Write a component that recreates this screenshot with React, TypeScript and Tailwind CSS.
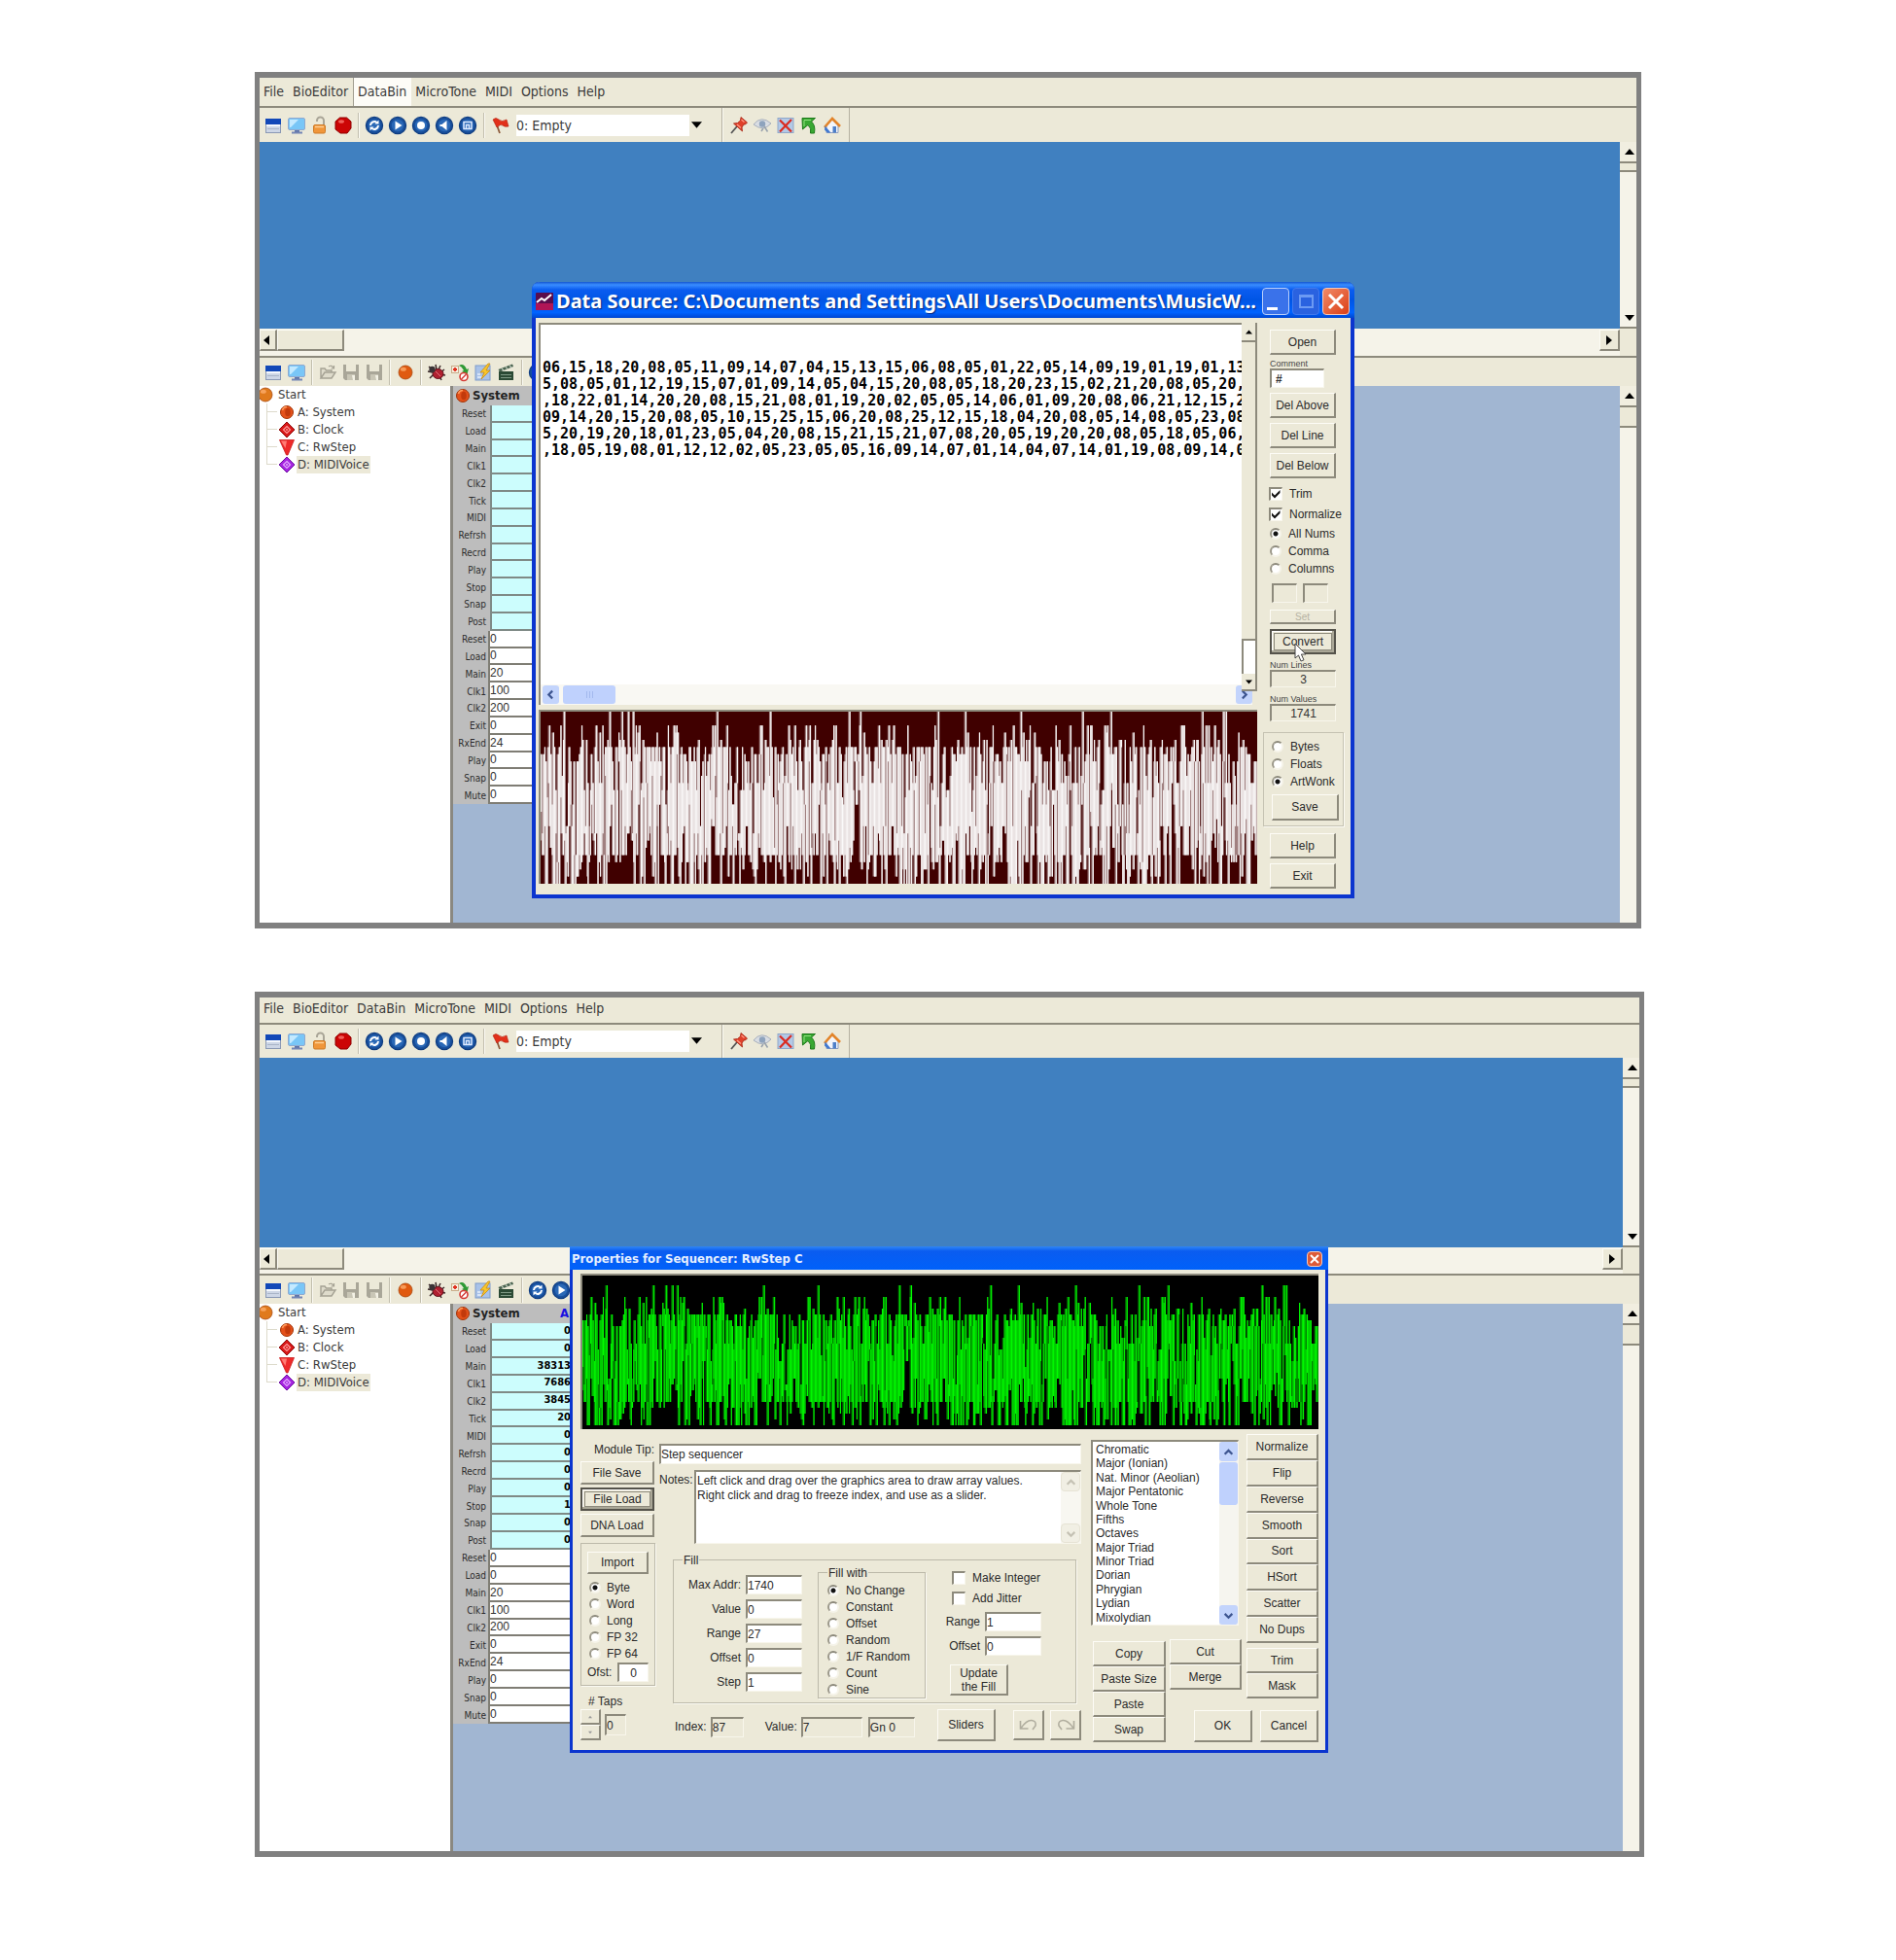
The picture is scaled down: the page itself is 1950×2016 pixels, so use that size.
import React from "react";

/* ---------- data ---------- */

const LETTER_FREQ = [
  82, 15, 28, 43, 127, 22, 20, 61, 70, 2, 8, 40, 24, 67, 75, 19, 1, 60, 63, 91, 28, 10, 24, 2, 0, 0,
];
const PEAKS = [
  0.032, 0.097, 0.114, 0.122, 0.13, 0.246, 0.321, 0.431, 0.447, 0.554, 0.592, 0.67, 0.757, 0.796,
  0.924, 0.953, 0.956,
];

function buildSamples(count: number): number[] {
  const total = LETTER_FREQ.reduce((a, b) => a + b, 0);
  let seed = 20417;
  const out: number[] = [];
  for (let i = 0; i < count; i++) {
    seed = (seed * 1103515245 + 12345) % 2147483648;
    let r = (seed / 2147483648) * total;
    let v = 0;
    while (v < 25 && r >= LETTER_FREQ[v]) {
      r -= LETTER_FREQ[v];
      v++;
    }
    out.push(Math.min(v + 1, 23));
  }
  PEAKS.forEach((p) => {
    out[Math.round((p * count) / 3) * 3 + 1] = 25;
  });
  return out;
}

const SAMPLES = buildSamples(1741);

/* One vertical bar per three samples, spanning the range of the samples around it. */
function wavePath(width: number, y0: number, perStep: number, span: number): string {
  const step = (width / SAMPLES.length) * 3;
  let d = "";
  for (let i = 0; i < SAMPLES.length; i += 3) {
    const near = SAMPLES.slice(i, i + span);
    const x = ((i / 3 + 0.5) * step).toFixed(2);
    const hi = (y0 - (Math.max(...near) - 1) * perStep).toFixed(1);
    const lo = (y0 - (Math.min(...near) - 1) * perStep).toFixed(1);
    d += `M${x} ${hi}V${lo}`;
  }
  return d;
}

const DATA_LINES = [
  "06,15,18,20,08,05,11,09,14,07,04,15,13,15,06,08,05,01,22,05,14,09,19,01,19,01,13,",
  "5,08,05,01,12,19,15,07,01,09,14,05,04,15,20,08,05,18,20,23,15,02,21,20,08,05,20,0",
  ",18,22,01,14,20,20,08,15,21,08,01,19,20,02,05,05,14,06,01,09,20,08,06,21,12,15,22",
  "09,14,20,15,20,08,05,10,15,25,15,06,20,08,25,12,15,18,04,20,08,05,14,08,05,23,08,",
  "5,20,19,20,18,01,23,05,04,20,08,15,21,15,21,07,08,20,05,19,20,20,08,05,18,05,06,1",
  ",18,05,19,08,01,12,12,02,05,23,05,05,16,09,14,07,01,14,04,07,14,01,19,08,09,14,07",
];

const INPUT_ROWS = ["Reset", "Load", "Main", "Clk1", "Clk2", "Tick", "MIDI", "Refrsh", "Recrd", "Play", "Stop", "Snap", "Post"];
const SETTING_ROWS: [string, string][] = [
  ["Reset", "0"],
  ["Load", "0"],
  ["Main", "20"],
  ["Clk1", "100"],
  ["Clk2", "200"],
  ["Exit", "0"],
  ["RxEnd", "24"],
  ["Play", "0"],
  ["Snap", "0"],
  ["Mute", "0"],
];

/* ---------- shared styles ---------- */

const APP_FONT = "font-['DejaVu_Sans_Condensed','Noto_Sans',sans-serif]";
const DLG_FONT = "font-['Liberation_Sans',sans-serif]";
const RAISED = "border-t border-l border-t-[#fdfcf6] border-l-[#fdfcf6] border-b-2 border-r-2 border-b-[#8d8a7c] border-r-[#8d8a7c] bg-[#ece9d8]";
const SUNKEN = "border-t-2 border-l-2 border-t-[#8d8a7c] border-l-[#8d8a7c] border-b border-r border-b-[#f8f6ec] border-r-[#f8f6ec]";

/* ---------- icons ---------- */

const svgProps = { width: 20, height: 20, viewBox: "0 0 20 20", "aria-hidden": true } as const;

const WindowIcon = () => (
  <svg {...svgProps}>
    <rect x="2" y="3" width="16" height="15" fill="#cdd6e6" />
    <rect x="2" y="3" width="16" height="6" fill="#1248b8" />
    <path d="M2 10h16" stroke="#f4f7fc" strokeWidth="2" />
    <path d="M4 13.500h12" stroke="#aab5c8" />
    <path d="M2 17.500h16M2.500 9v9M17.500 9v9" stroke="#8a98b4" />
  </svg>
);
const MonitorIcon = () => (
  <svg {...svgProps}>
    <rect x="1.500" y="2.500" width="17" height="12" rx="1.500" fill="#79c6f7" stroke="#8fa9cf" />
    <path d="M3 4h9L4 12H3z" fill="#c4e9ff" />
    <path d="M8 15h5v2H8z" fill="#5f74a8" />
    <path d="M5 17.500h11" stroke="#7385b5" strokeWidth="2" />
  </svg>
);
const LockIcon = () => (
  <svg {...svgProps}>
    <path d="M7 6V5a3.500 3.500 0 0 1 7 0v5" fill="none" stroke="#a9a597" strokeWidth="2" />
    <rect x="3.500" y="9.500" width="12" height="8.500" rx="1.500" fill="#f0963a" stroke="#cd7a27" />
    <path d="M5 11.500h9" stroke="#ffcf94" strokeWidth="1.500" />
  </svg>
);
const StopIcon = () => (
  <svg {...svgProps}>
    <path d="M6.500 2h7L18 6v7l-4 5H7l-5-4V6z" fill="#cc0505" stroke="#8e0000" />
    <ellipse cx="8" cy="6" rx="3" ry="1.800" fill="#f0605a" />
  </svg>
);
const Ball = ({ color = "#e05a10" }: { color?: string }) => (
  <svg {...svgProps}>
    <circle cx="10" cy="10" r="7" fill={color} stroke="#a8480c" strokeWidth=".8" />
    <ellipse cx="7.800" cy="6.800" rx="3" ry="2" fill="#ffb070" opacity=".75" />
  </svg>
);
const SystemBall = () => (
  <svg {...svgProps}>
    <circle cx="10" cy="10" r="6.500" fill="#e4511a" stroke="#a23408" />
    <ellipse cx="11" cy="10" rx="2.800" ry="4.300" fill="#c23a0c" />
    <path d="M5.500 8q1-3.500 4.500-3.500" stroke="#ff9c5c" fill="none" strokeWidth="1.500" />
  </svg>
);
const Round = ({ children }: { children?: React.ReactNode }) => (
  <svg {...svgProps}>
    <circle cx="10" cy="10" r="8.600" fill="#184f9c" stroke="#0f3d80" strokeWidth="1.200" />
    <circle cx="10" cy="10" r="6.200" fill="#2a68b6" />
    {children}
  </svg>
);
const RefreshRound = () => (
  <Round>
    <path d="M6 10a4 4 0 0 1 6.500-3M14 10a4 4 0 0 1-6.500 3" stroke="#fff" strokeWidth="2" fill="none" />
    <path d="M10.500 8.500h4v-4zM9.500 11.500h-4v4z" fill="#fff" />
  </Round>
);
const PlayRound = () => (
  <Round>
    <path d="M7.500 5.500v9l7-4.500z" fill="#fff" />
  </Round>
);
const DotRound = () => (
  <Round>
    <circle cx="10" cy="10" r="4" fill="#fff" />
  </Round>
);
const BackRound = () => (
  <Round>
    <path d="M12.500 5v10l-5-4H5.500V9h2z" fill="#fff" />
  </Round>
);
const PageRound = () => (
  <Round>
    <path d="M6 6.500h8v7H6zM8.500 13V9.500h3V13" fill="none" stroke="#dfeaff" strokeWidth="1.500" />
  </Round>
);
const FlagIcon = () => (
  <svg {...svgProps}>
    <path d="M4 4l5 14" stroke="#8c5a3a" strokeWidth="1.800" />
    <path d="M2 4q3-3 6 0t8 0l2 7q-4 1-6-1t-6 2z" fill="#e2301a" stroke="#b01c0c" strokeWidth=".6" />
  </svg>
);
const PinIcon = () => (
  <svg {...svgProps}>
    <path d="M2 18l6-7" stroke="#555" strokeWidth="1.800" />
    <path d="M12 1.500l6.500 5.500-2 2-1.500 0-2 3 .5 4L4.500 8l4-.5 3-2.500z" fill="#e0402a" stroke="#a3200f" strokeWidth=".8" />
    <path d="M12.500 4l3 2.500M8 9l4 3.500" stroke="#ff9a85" strokeWidth="1.300" />
  </svg>
);
const EyeIcon = () => (
  <svg {...svgProps}>
    <path d="M1 9q8-10 18-1-8 9-18 1z" fill="#d9dde3" stroke="#a8b0bc" />
    <circle cx="10" cy="8.500" r="3.200" fill="#8ea3bd" />
    <path d="M12 11l3.500 5.500M11 13l-2 3" stroke="#9aa3ae" strokeWidth="1.600" />
  </svg>
);
const CrossIcon = () => (
  <svg {...svgProps}>
    <rect x="2" y="2.500" width="16" height="15" fill="#b3c9e6" stroke="#8fa7c9" />
    <path d="M4 4.500l12 12M16 4l-12 12.500" stroke="#db2a20" strokeWidth="2.200" />
  </svg>
);
const GreenArrowIcon = () => (
  <svg {...svgProps}>
    <path d="M3 2.500h13.500L12.500 6q4.500 4 3 12l-4 0q1.500-5-2.500-8.500L3.500 14z" fill="#38a832" stroke="#1d7a1a" />
    <path d="M5 4.500h7M5 5v6" stroke="#8fe07f" />
  </svg>
);
const HouseIcon = () => (
  <svg {...svgProps}>
    <path d="M4 10v7.500h12V10l-6-6z" fill="#f3f5fa" stroke="#8f9fc0" />
    <path d="M2 12L10 3l8 8" fill="none" stroke="#e2842a" strokeWidth="2.600" />
    <path d="M2.500 10.500l6 7H5l-3-3z" fill="#3f78d0" />
    <rect x="10.500" y="11" width="3.500" height="6.500" fill="#4d7fc8" />
  </svg>
);
const FolderIcon = () => (
  <svg {...svgProps}>
    <path d="M3 16V6h4l1.500 2H14v2M3 16l4-6h11l-4 6z" fill="#dedbcb" stroke="#a5a294" strokeWidth="1.400" />
    <path d="M11 4q3-2 5 1.500M16.500 3v3h-3" fill="none" stroke="#a5a294" strokeWidth="1.200" />
  </svg>
);
const DiskIcon = () => (
  <svg {...svgProps}>
    <path d="M2 2h16v16H4l-2-2z" fill="#a9a698" />
    <path d="M5 2h10v7H5z" fill="#ece9d8" />
    <path d="M6 12h8v6H6z" fill="#c9c6b6" />
    <path d="M11 13h3v5h-2z" fill="#f4f2e6" />
  </svg>
);
const BugIcon = () => (
  <svg {...svgProps}>
    <path d="M2 4l5 4M1 9l5 1M3 16l4-4M9 2l1 5M14 3l-2 4M18 7l-4 3M19 13l-5-1M15 18l-2-4" stroke="#3c2a2a" strokeWidth="1.500" />
    <ellipse cx="11.500" cy="11.500" rx="5.500" ry="5" fill="#b02030" stroke="#5c0e18" />
    <circle cx="5.500" cy="7" r="3.200" fill="#3a3336" />
    <path d="M9 9l5 5" stroke="#e2707a" />
  </svg>
);
const PalmIcon = () => (
  <svg {...svgProps}>
    <rect x="1.500" y="3.500" width="7" height="7" fill="#f6efe0" stroke="#c9ac8a" />
    <path d="M3 7h4M5 5v4" stroke="#e03020" strokeWidth="1.800" />
    <path d="M9 3q5-3 8 4l2-1-1.500 6-5.500-3 2-1q-2-4-5-5z" fill="#2f9a35" />
    <circle cx="14" cy="14.500" r="4" fill="#fff" stroke="#d43a34" strokeWidth="1.600" />
    <path d="M11.500 17l5-5" stroke="#d43a34" strokeWidth="1.500" />
  </svg>
);
const BoltIcon = () => (
  <svg {...svgProps}>
    <rect x="2" y="3" width="15" height="15" fill="#a9c2e8" stroke="#7f9cc9" />
    <path d="M4 15h6M4 12h3" stroke="#e6effc" strokeWidth="1.500" />
    <path d="M15 1L7 10h4l-3 7 9-9h-4l4-7z" fill="#f9c62b" stroke="#c98a14" strokeWidth=".8" />
  </svg>
);
const ClapIcon = () => (
  <svg {...svgProps}>
    <rect x="2" y="9" width="15" height="9" fill="#2b4a34" />
    <path d="M1.500 7L16 1.500l1 2.500L3 9.500z" fill="#47604d" />
    <path d="M5 6l2 2M9 4.500l2 2M13 3l2 2" stroke="#b8c7b8" strokeWidth="1.300" />
    <path d="M4 12.500h11M4 15.500h11" stroke="#7f9a85" />
  </svg>
);
const Diamond = ({ fill, dark, light }: { fill: string; dark: string; light: string }) => (
  <svg {...svgProps}>
    <path d="M10 2l8 8-8 8-8-8z" fill={fill} stroke={dark} />
    <path d="M10 6.500l3.500 3.500-3.500 3.500L6.500 10z" fill="none" stroke={light} strokeWidth="1.200" />
    <circle cx="10" cy="10" r="1" fill={light} />
  </svg>
);
const TriangleDown = () => (
  <svg {...svgProps}>
    <path d="M2.500 2.500h15L11 18H9.500z" fill="#ee2a2a" stroke="#c81818" strokeWidth=".8" />
    <path d="M4 3.500h6L8.500 11z" fill="#ff7c74" />
  </svg>
);
const CheckMark = () => (
  <svg width="9" height="9" viewBox="0 0 9 9" className="pointer-events-none absolute left-[3px] top-[3px]" aria-hidden>
    <path d="M0 2.500l3 3L8.500 0v3L3 8.500 0 5.500z" fill="#111" />
  </svg>
);

/* ---------- small controls ---------- */

type Dir = "up" | "down" | "left" | "right";
const TRI: Record<Dir, string> = {
  up: "M5 2l5 6H0z",
  down: "M0 2h10L5 8z",
  left: "M8 0v10L2 5z",
  right: "M2 0v10l6-5z",
};
const Arrow = ({ dir, size = 10, color = "#000" }: { dir: Dir; size?: number; color?: string }) => (
  <svg width={size} height={size} viewBox="0 0 10 10" aria-hidden>
    <path d={TRI[dir]} fill={color} />
  </svg>
);
const CHEVRON: Record<Dir, string> = {
  up: "M1.500 7L5 3.500 8.500 7",
  down: "M1.500 3.500L5 7l3.500-3.500",
  left: "M6.500 1.500L3 5l3.500 3.500",
  right: "M3.500 1.500L7 5 3.500 8.500",
};
const Chevron = ({ dir, color = "#3d5590" }: { dir: Dir; color?: string }) => (
  <svg width="11" height="11" viewBox="0 0 10 10" aria-hidden>
    <path d={CHEVRON[dir]} fill="none" stroke={color} strokeWidth="2" />
  </svg>
);

function Tool({ label, children }: { label: string; children: React.ReactNode }) {
  return (
    <button type="button" aria-label={label} className="flex h-6 w-6 shrink-0 items-center justify-center">
      {children}
    </button>
  );
}
const Sep = ({ space = "mx-[3px]" }: { space?: string }) => (
  <span className={`h-[26px] w-[2px] shrink-0 border-l border-r border-l-[#c2beae] border-r-[#fbfaf3] ${space}`} />
);

function Btn({ className = "", children }: { className?: string; children: React.ReactNode }) {
  return (
    <button type="button" className={`flex items-center justify-center whitespace-nowrap text-[12px] leading-[14px] text-[#2a2a2a] ${RAISED} ${className}`}>
      {children}
    </button>
  );
}

function FocusBtn({ className = "", children }: { className?: string; children: React.ReactNode }) {
  return (
    <button
      type="button"
      className={`flex border-2 border-[#55534b] bg-[#ece9d8] p-[2px] text-[12px] leading-[14px] text-[#2a2a2a] shadow-[inset_-2px_-2px_0_#aaa797,inset_1px_1px_0_#fff] ${className}`}
    >
      <span className="flex flex-1 items-center justify-center self-stretch border border-[#8d8a7c]">{children}</span>
    </button>
  );
}

function Radio({ name, label, checked, className = "", gap = "gap-3" }: { name: string; label: string; checked?: boolean; className?: string; gap?: string }) {
  return (
    <label className={`flex items-center whitespace-nowrap text-[12px] text-[#2a2a2a] ${gap} ${className}`}>
      <input
        type="radio"
        name={name}
        defaultChecked={checked}
        className="m-0 h-3 w-3 shrink-0 appearance-none rounded-full border-2 border-b-[#f6f4ea] border-l-[#9b988a] border-r-[#f6f4ea] border-t-[#8d8a7c] bg-white checked:bg-[radial-gradient(circle,#111_0,#111_2px,#fff_3px)]"
      />
      {label}
    </label>
  );
}

function Check({ label, checked, className = "" }: { label: string; checked?: boolean; className?: string }) {
  return (
    <label className={`flex items-center gap-[7px] whitespace-nowrap text-[12px] text-[#2a2a2a] ${className}`}>
      <span className="relative flex">
        <input type="checkbox" defaultChecked={checked} className={`m-0 h-[14px] w-[14px] shrink-0 appearance-none bg-white ${SUNKEN}`} />
        {checked && <CheckMark />}
      </span>
      {label}
    </label>
  );
}

/* ---------- scroll bars of the workspace ---------- */

function VScroll({ thumb, bottomArrow }: { thumb: string; bottomArrow?: boolean }) {
  return (
    <div className="flex w-[17px] shrink-0 flex-col bg-[#f5f3e9]">
      <button type="button" aria-label="Scroll up" className="flex h-[22px] items-center justify-end border-b-2 border-[#8d8a7c] bg-[#f1eee0] pr-[2px]">
        <Arrow dir="up" />
      </button>
      <div className={`border-b-2 border-[#8d8a7c] bg-[#ece9d8] ${thumb}`} />
      <div className="flex-1" />
      {bottomArrow && (
        <button type="button" aria-label="Scroll down" className="flex h-5 items-center justify-end border-b-2 border-[#8d8a7c] pr-[2px]">
          <Arrow dir="down" />
        </button>
      )}
    </div>
  );
}

function HScroll({ height }: { height: string }) {
  return (
    <div className={`flex border-b-2 border-[#8d8a7c] bg-[#ece9d8] ${height}`}>
      <div className="flex flex-1 items-start bg-[#f5f3e9] pt-px">
        <button type="button" aria-label="Scroll left" className={`flex h-[22px] w-[18px] items-center justify-start pl-px ${RAISED}`}>
          <Arrow dir="left" />
        </button>
        <div className={`h-[22px] w-[69px] ${RAISED}`} />
        <div className="flex-1" />
        <button type="button" aria-label="Scroll right" className={`flex h-[22px] w-[21px] items-center justify-center ${RAISED}`}>
          <Arrow dir="right" />
        </button>
      </div>
      <div className="w-[17px]" />
    </div>
  );
}

/* ---------- workspace ---------- */

function MenuBar({ active, className }: { active?: string; className: string }) {
  return (
    <nav className={`flex items-stretch border-b-2 border-[#8d8a7c] bg-[#ece9d8] text-[14px] text-[#3a3a3a] ${className}`}>
      {["File", "BioEditor", "DataBin", "MicroTone", "MIDI", "Options", "Help"].map((m) => (
        <button
          key={m}
          type="button"
          className={
            m === active
              ? "flex items-center border-l border-[#a19e90] bg-[#fdfcf7] pl-1 pr-[5px]"
              : "flex items-center pl-1 pr-[5px]"
          }
        >
          {m}
        </button>
      ))}
    </nav>
  );
}

function MainToolbar({ height }: { height: string }) {
  return (
    <div className={`flex items-stretch bg-[#ece9d8] ${height}`}>
      <div className="flex w-[476px] items-center border-r border-[#b5b1a1] pl-[2px]">
        <Tool label="Window"><WindowIcon /></Tool>
        <Tool label="Display"><MonitorIcon /></Tool>
        <Tool label="Unlock"><LockIcon /></Tool>
        <Tool label="Stop"><StopIcon /></Tool>
        <Sep />
        <Tool label="Refresh"><RefreshRound /></Tool>
        <Tool label="Play"><PlayRound /></Tool>
        <Tool label="Record"><DotRound /></Tool>
        <Tool label="Back"><BackRound /></Tool>
        <Tool label="Page"><PageRound /></Tool>
        <Sep space="mx-1" />
        <Tool label="Flag"><FlagIcon /></Tool>
        <div className="relative ml-1 flex h-[22px] w-[194px]">
          <select aria-label="Preset" className="flex-1 appearance-none border-r-[16px] border-[#ece9d8] bg-white text-[14px] leading-[22px] text-[#3a3a3a]">
            <option>0: Empty</option>
          </select>
          <span className="pointer-events-none absolute right-[3px] top-[5px]">
            <Arrow dir="down" size={11} />
          </span>
        </div>
      </div>
      <div className="flex items-center border-l border-r border-l-[#fbfaf3] border-r-[#b5b1a1] pl-1 pr-[5px]">
        <Tool label="Pin"><PinIcon /></Tool>
        <Tool label="View"><EyeIcon /></Tool>
        <Tool label="Delete"><CrossIcon /></Tool>
        <Tool label="Import"><GreenArrowIcon /></Tool>
        <Tool label="Home"><HouseIcon /></Tool>
      </div>
    </div>
  );
}

function ModuleToolbar() {
  return (
    <div className="flex h-[29px] items-center bg-[#ece9d8] pl-[2px]">
      <Tool label="Window"><WindowIcon /></Tool>
      <Tool label="Display"><MonitorIcon /></Tool>
      <Sep />
      <Tool label="Open"><FolderIcon /></Tool>
      <Tool label="Save"><DiskIcon /></Tool>
      <Tool label="Save as"><DiskIcon /></Tool>
      <Sep />
      <Tool label="Module"><Ball /></Tool>
      <Sep />
      <Tool label="Debug"><BugIcon /></Tool>
      <Tool label="Swap"><PalmIcon /></Tool>
      <Tool label="Run"><BoltIcon /></Tool>
      <Tool label="Scene"><ClapIcon /></Tool>
      <Sep />
      <Tool label="Refresh"><RefreshRound /></Tool>
      <Tool label="Play"><PlayRound /></Tool>
    </div>
  );
}

function Tree() {
  const nodes: [React.ReactNode, string][] = [
    [<SystemBall />, "A: System"],
    [<Diamond fill="#d81818" dark="#8e0c0c" light="#ff9a9a" />, "B: Clock"],
    [<TriangleDown />, "C: RwStep"],
    [<Diamond fill="#a524e0" dark="#6d0fa0" light="#e3aaff" />, "D: MIDIVoice"],
  ];
  return (
    <div className="w-[196px] shrink-0 overflow-hidden bg-white text-[13px] leading-[18px] text-[#3a3a3a]">
      <div className="-ml-1 flex items-center">
        <span className="flex h-[18px] items-center"><Ball color="#e07a1c" /></span>
        <span className="pl-[3px]">Start</span>
      </div>
      <ul className="ml-[7px]">
        {nodes.map(([icon, text], i) => (
          <li key={text} className="flex h-[18px] items-center">
            <span className="flex h-[18px] w-[11px] flex-col">
              <span className="h-[9px] border-b border-l border-[#dddacb]" />
              <span className={i < nodes.length - 1 ? "h-[9px] border-l border-[#dddacb]" : "h-[9px]"} />
            </span>
            {icon}
            <span className={text.startsWith("D") ? "bg-[#ece9d8] px-px" : "pl-px"}>{text}</span>
          </li>
        ))}
      </ul>
    </div>
  );
}

function ModulePanel({ values, rowsHeight }: { values?: string[]; rowsHeight: string }) {
  return (
    <div className="w-[121px] shrink-0 self-start bg-[#bdbdbd]">
      <div className="flex h-5 items-center pr-[2px] text-[13px] font-bold text-[#222]">
        <SystemBall />
        <span className="flex-1">System</span>
        <span className="text-[#1a10e0]">A</span>
      </div>
      <div className={`grid auto-rows-fr ${rowsHeight}`}>
        {INPUT_ROWS.map((label, i) => (
          <div key={label} className="flex min-h-0 items-stretch">
            <span className="flex w-[34px] items-center justify-end text-[10px] text-[#2c2c2c]">{label}</span>
            <output className="ml-1 flex flex-1 items-center justify-end overflow-hidden border-b-2 border-l-2 border-[#7f8a86] bg-[#ccfdfd] text-[11px] font-bold text-black">
              {values ? values[i] : ""}
            </output>
          </div>
        ))}
        {SETTING_ROWS.map(([label, value], i) => (
          <label key={i} className="flex min-h-0 items-stretch">
            <span className="flex w-[34px] items-center justify-end text-[10px] text-[#2c2c2c]">{label}</span>
            <input
              defaultValue={value}
              className={`ml-[2px] w-0 min-w-0 flex-1 border-b-2 border-l-2 border-[#7f7d74] bg-white p-0 text-[12px] leading-none text-[#333] ${DLG_FONT}`}
            />
          </label>
        ))}
      </div>
    </div>
  );
}

/* ---------- "Data Source" dialog ---------- */

function DataSourceDialog() {
  return (
    <section
      role="dialog"
      aria-label="Data Source"
      className={`absolute left-[280px] top-[210px] w-[846px] rounded-t-lg border-4 border-t-0 border-[#0b35cf] bg-[#ece9d8] ${DLG_FONT}`}
    >
      <header className="-mx-1 flex h-[37px] items-center gap-[2px] rounded-t-lg bg-[linear-gradient(#1557d0_0,#3a8dff_3px,#0a5cf0_8px,#0055e5_50%,#0063ff_85%,#0046d0_100%)] pl-1 pr-[5px] pt-[2px]">
        <svg width="18" height="18" viewBox="0 0 18 18" aria-hidden className="shrink-0">
          <rect width="18" height="18" rx="1" fill="#5a0d4c" />
          <rect y="11" width="18" height="7" fill="#b01556" />
          <path d="M1 10l5-4 3 2 7-6" fill="none" stroke="#fff" strokeWidth="2" />
        </svg>
        <h2 className="flex-1 whitespace-nowrap pl-px font-['Noto_Sans',sans-serif] text-[20px] font-bold leading-6 text-white [text-shadow:1px_1px_1px_#0a2a80]">
          Data Source: C:\Documents and Settings\All Users\Documents\MusicW...
        </h2>
        <button type="button" aria-label="Minimize" className="flex h-7 w-7 items-end rounded border border-[#b9cffb] bg-[#3a72ea] p-1">
          <span className="h-[3px] w-[11px] bg-white" />
        </button>
        <button type="button" aria-label="Maximize" className="ml-px flex h-7 w-7 items-center justify-center rounded border border-[#3f78ee] bg-[#2a62e0]">
          <span className="h-[14px] w-[15px] border-2 border-t-[3px] border-[#6c9af3]" />
        </button>
        <button type="button" aria-label="Close" className="ml-px flex h-7 w-7 items-center justify-center rounded border border-[#f3c8ba] bg-[linear-gradient(135deg,#f08a68,#dc3f16)]">
          <svg width="18" height="18" viewBox="0 0 18 18" aria-hidden>
            <path d="M2 2l14 14M16 2L2 16" stroke="#fff" strokeWidth="3" />
          </svg>
        </button>
      </header>

      <div className="flex">
        <div className="flex flex-1 flex-col pb-[11px] pl-[3px] pt-[5px]">
          <div className="flex">
            <div className="flex min-w-0 flex-1 flex-col border-l-2 border-t-2 border-[#8d8a7c]">
              <textarea
                aria-label="Data"
                readOnly
                wrap="off"
                defaultValue={DATA_LINES.join("\n")}
                className="block h-[370px] w-full resize-none overflow-hidden whitespace-pre bg-white pl-[2px] pt-[36px] font-['DejaVu_Sans_Mono','Liberation_Mono',monospace] text-[15px] font-bold leading-[17px] text-black"
              />
              <div className="relative z-20 -mr-[11px] flex h-[21px] items-center bg-[#f9f8f3] pl-[2px]">
                <button type="button" aria-label="Scroll left" className="flex h-[19px] w-[17px] items-center justify-center rounded-[3px] bg-[#c3d4fc]"><Chevron dir="left" /></button>
                <div className="ml-1 flex h-[19px] w-[54px] items-center justify-center gap-[2px] rounded-[3px] bg-[#bfd1fd]">
                  <span className="h-[7px] w-px bg-[#a3b9ee]" />
                  <span className="h-[7px] w-px bg-[#a3b9ee]" />
                  <span className="h-[7px] w-px bg-[#a3b9ee]" />
                </div>
                <div className="flex-1" />
                <button type="button" aria-label="Scroll right" className="flex h-[19px] w-[17px] items-center justify-center rounded-[3px] bg-[#c3d4fc]"><Chevron dir="right" /></button>
              </div>
            </div>
            <div className="z-30 flex h-[379px] w-4 flex-col border-b-2 border-r-2 border-[#8d8a7c] bg-[#ece9d8]">
              <button type="button" aria-label="Scroll up" className="flex h-5 items-center justify-center border-b-2 border-[#8d8a7c]"><Arrow dir="up" size={7} /></button>
              <div className="flex-1 border-b-2 border-[#8d8a7c]" />
              <div className="h-[34px] border-l-2 border-[#8d8a7c] bg-white" />
              <button type="button" aria-label="Scroll down" className="flex h-4 items-center justify-center"><Arrow dir="down" size={7} /></button>
            </div>
          </div>
          <div className="mt-[5px] border-l-2 border-t-2 border-[#8d8a7c]">
            <svg viewBox="0 0 737 177" preserveAspectRatio="none" className="block h-[177px] w-full bg-[#400000]" role="img" aria-label="Data wave form">
              <path d={wavePath(737, 177, 7.4, 5)} stroke="#fff" strokeOpacity=".5" strokeWidth="1.270" fill="none" />
              <path d={wavePath(737, 177, 7.4, 3)} stroke="#fff" strokeOpacity=".5" strokeWidth="1.270" fill="none" />
              <path d={wavePath(737, 177, 7.4, 3)} stroke="#fff" strokeWidth=".9" fill="none" />
            </svg>
          </div>
        </div>

        <div className="flex w-24 flex-col pl-[13px] pr-[15px] pt-3">
          <Btn className="h-[26px]">Open</Btn>
          <label className="mt-1 flex flex-col items-start text-[9px] leading-[10px] text-[#444]">
            Comment
            <input defaultValue="#" className={`h-5 w-14 bg-white pl-1 text-[12px] font-bold text-[#333] ${SUNKEN}`} />
          </label>
          <Btn className="mt-[5px] h-[26px]">Del Above</Btn>
          <Btn className="mt-[5px] h-[26px]">Del Line</Btn>
          <Btn className="mt-[5px] h-[26px]">Del Below</Btn>
          <Check label="Trim" checked className="-ml-px mt-[5px] h-[21px]" />
          <Check label="Normalize" checked className="-ml-px h-[21px]" />
          <Radio name="format" label="All Nums" checked className="mt-px h-[18px]" gap="gap-[7px]" />
          <Radio name="format" label="Comma" className="h-[18px]" gap="gap-[7px]" />
          <Radio name="format" label="Columns" className="h-[18px]" gap="gap-[7px]" />
          <div className="mt-[6px] flex gap-[6px] pl-[2px]">
            <input aria-label="First column" className={`h-5 w-[26px] ${SUNKEN}`} />
            <input aria-label="Last column" className={`h-5 w-[26px] ${SUNKEN}`} />
          </div>
          <button type="button" disabled className={`mt-[7px] flex h-[15px] items-center justify-center text-[10px] text-[#b5b2a3] ${RAISED}`}>Set</button>
          <div className="relative mt-[5px] flex">
            <FocusBtn className="h-[26px] flex-1">Convert</FocusBtn>
            <svg width="13" height="20" viewBox="0 0 13 20" className="absolute left-[25px] top-[14px]" aria-hidden>
              <path d="M1 1v15l3.500-3 2.500 6 3-1.200-2.600-5.800H12z" fill="#fff" stroke="#444" />
            </svg>
          </div>
          <label className="mt-[6px] flex flex-col text-[9px] leading-[10px] text-[#444]">
            Num Lines
            <output className={`h-[18px] text-center text-[12px] leading-4 text-[#333] ${SUNKEN}`}>3</output>
          </label>
          <label className="mt-[7px] flex flex-col text-[9px] leading-[10px] text-[#444]">
            Num Values
            <output className={`h-[18px] text-center text-[12px] leading-4 text-[#333] ${SUNKEN}`}>1741</output>
          </label>
          <fieldset className="-ml-[7px] -mr-2 mt-[11px] border border-[#c5c2b2] pb-[5px] pl-2 pr-1 pt-[5px] shadow-[1px_1px_0_#fbfaf3]">
            <Radio name="output" label="Bytes" className="h-[18px]" gap="gap-[7px]" />
            <Radio name="output" label="Floats" className="h-[18px]" gap="gap-[7px]" />
            <Radio name="output" label="ArtWonk" checked className="h-[18px]" gap="gap-[7px]" />
            <Btn className="mt-1 h-[27px] w-full">Save</Btn>
          </fieldset>
          <Btn className="mt-[7px] h-[26px]">Help</Btn>
          <Btn className="mt-[5px] h-[26px]">Exit</Btn>
        </div>
      </div>
    </section>
  );
}

/* ---------- "Properties for Sequencer" dialog ---------- */

function Field({ label, value, width = "w-[58px]" }: { label: string; value: string; width?: string }) {
  return (
    <label className="flex h-5 items-center justify-end gap-[5px] whitespace-nowrap text-[12px] text-[#2a2a2a]">
      {label}
      <input defaultValue={value} className={`h-5 min-w-0 bg-white text-[12px] leading-none ${width} ${SUNKEN}`} />
    </label>
  );
}

function Readout({ label, value, width, className = "" }: { label?: string; value: string; width: string; className?: string }) {
  return (
    <label className={`flex items-center gap-1 whitespace-nowrap ${className}`}>
      {label}
      <output className={`flex h-[21px] items-center ${width} ${SUNKEN}`}>{value}</output>
    </label>
  );
}

function SequencerDialog() {
  const scales = ["Chromatic", "Major (Ionian)", "Nat. Minor (Aeolian)", "Major Pentatonic", "Whole Tone", "Fifths", "Octaves", "Major Triad", "Minor Triad", "Dorian", "Phrygian", "Lydian", "Mixolydian"];
  return (
    <section
      role="dialog"
      aria-label="Properties for Sequencer: RwStep C"
      className={`absolute left-[319px] top-[256px] w-[780px] border-[3px] border-t-0 border-[#0b35cf] bg-[#ece9d8] text-[12px] text-[#2a2a2a] ${DLG_FONT}`}
    >
      <header className="-mx-[3px] flex h-6 items-center bg-[linear-gradient(#2f86f5_0,#0a5cf0_5px,#0061fa_100%)] pl-[2px] pr-[6px] pt-px">
        <h2 className={`flex-1 text-[13px] font-bold text-[#e6efff] ${APP_FONT}`}>Properties for Sequencer: RwStep C</h2>
        <button type="button" aria-label="Close" className="flex h-4 w-4 items-center justify-center rounded-sm border border-[#f3c8ba] bg-[#dd5a38]">
          <svg width="10" height="10" viewBox="0 0 10 10" aria-hidden>
            <path d="M1 1l8 8M9 1L1 9" stroke="#fff" strokeWidth="2" />
          </svg>
        </button>
      </header>

      <div className="pb-2 pl-2 pr-[7px] pt-1">
        <div className="border-l-2 border-t-2 border-[#8d8a7c]">
          <svg viewBox="0 0 757 158" preserveAspectRatio="none" className="block h-[158px] w-full bg-black" role="img" aria-label="Sequence wave form">
            <path d={wavePath(757, 154, 6, 5)} stroke="#00ff00" strokeOpacity=".5" strokeWidth="1.300" fill="none" />
            <path d={wavePath(757, 154, 6, 3)} stroke="#00ff00" strokeWidth="1" fill="none" />
          </svg>
        </div>

        <div className="mt-[5px] flex">
          {/* left column */}
          <div className="mr-1 flex w-[77px] flex-col pt-2">
            <span className="h-5 whitespace-nowrap pr-px text-right leading-4">Module Tip:</span>
            <Btn className="mr-px h-6">File Save</Btn>
            <FocusBtn className="mr-px mt-[3px] h-6">File Load</FocusBtn>
            <Btn className="mr-px mt-[3px] h-6">DNA Load</Btn>
            <fieldset className="mt-[6px] flex h-[147px] flex-col border border-[#bcb9a9] px-[6px] pt-2 shadow-[1px_1px_0_#fbfaf3]">
              <Btn className="mb-[5px] h-[23px]">Import</Btn>
              {["Byte", "Word", "Long", "FP 32", "FP 64"].map((t) => (
                <Radio key={t} name="import" label={t} checked={t === "Byte"} className="h-[17px] pl-[2px]" gap="gap-[6px]" />
              ))}
              <label className="mt-px flex items-center justify-between">
                Ofst:
                <input defaultValue="0" className={`h-5 w-8 bg-white text-center text-[12px] ${SUNKEN}`} />
              </label>
            </fieldset>
            <span className="mt-2 pl-2 leading-4"># Taps</span>
            <div className="flex gap-1">
              <div className="flex w-[21px] flex-col">
                <Btn className="h-4"><Arrow dir="up" size={4} color="#999" /></Btn>
                <Btn className="h-4"><Arrow dir="down" size={4} color="#999" /></Btn>
              </div>
              <output aria-label="Taps" className={`mt-[5px] flex h-[22px] w-[22px] items-center ${SUNKEN}`}>0</output>
            </div>
          </div>

          {/* middle column */}
          <div className="mr-[10px] flex flex-1 flex-col pt-[10px]">
            <input aria-label="Module Tip" defaultValue="Step sequencer" className={`h-[21px] w-full bg-white text-[12px] ${SUNKEN}`} />
            <label className="mt-[6px] flex items-start">
              <span className="w-9 pt-[2px] leading-4">Notes:</span>
              <span className={`flex h-[76px] flex-1 bg-white ${SUNKEN}`}>
                <textarea
                  readOnly
                  defaultValue={"Left click and drag over the graphics area to draw array values.\nRight click and drag to freeze index, and use as a slider."}
                  className="h-full flex-1 resize-none overflow-hidden bg-white pl-px pt-[2px] text-[12px] leading-[15px]"
                />
                <span className="flex w-5 flex-col justify-between bg-[#f8f7f1]">
                  <span className="flex h-5 items-center justify-center rounded-sm border border-[#e6e3d4] bg-[#f1efe4]"><Chevron dir="up" color="#c5c2b4" /></span>
                  <span className="flex h-5 items-center justify-center rounded-sm border border-[#e6e3d4] bg-[#f1efe4]"><Chevron dir="down" color="#c5c2b4" /></span>
                </span>
              </span>
            </label>

            <div className="relative ml-[14px] mr-[5px] mt-4 flex h-[148px] border border-[#bcb9a9] shadow-[1px_1px_0_#fbfaf3]" role="group" aria-label="Fill">
              <span className="absolute -top-2 left-[9px] bg-[#ece9d8] px-px leading-4">Fill</span>
              <div className="flex w-[132px] flex-col gap-[5px] pt-[15px]">
                <Field label="Max Addr:" value="1740" />
                <Field label="Value" value="0" />
                <Field label="Range" value="27" />
                <Field label="Offset" value="0" />
                <Field label="Step" value="1" />
              </div>
              <div className="relative ml-4 mt-3 flex h-[130px] w-[111px] flex-col border border-[#bcb9a9] pl-[9px] pt-[9px] shadow-[1px_1px_0_#fbfaf3]" role="group" aria-label="Fill with">
                <span className="absolute -top-2 left-[9px] bg-[#ece9d8] px-px leading-4">Fill with</span>
                {["No Change", "Constant", "Offset", "Random", "1/F Random", "Count", "Sine"].map((t) => (
                  <Radio key={t} name="fill" label={t} checked={t === "No Change"} className="h-[17px]" gap="gap-[7px]" />
                ))}
              </div>
              <div className="ml-5 flex flex-1 flex-col items-start pt-[7px]">
                <Check label="Make Integer" className="ml-[7px] h-[21px]" />
                <Check label="Add Jitter" className="ml-[7px] h-[21px]" />
                <div className="mt-1 flex w-[99px] flex-col gap-[5px]">
                  <Field label="Range" value="1" />
                  <Field label="Offset" value="0" />
                </div>
                <Btn className="ml-[5px] mt-[9px] h-8 w-[60px] whitespace-pre-line text-center">{"Update\nthe Fill"}</Btn>
              </div>
            </div>

            <div className="mt-[6px] flex h-[33px] items-center">
              <Readout label="Index:" value="87" width="w-[34px]" className="ml-4 pt-[3px]" />
              <Readout label="Value:" value="7" width="w-[63px]" className="ml-[22px] pt-[3px]" />
              <Readout value="Gn 0" width="w-12" className="ml-[6px] pt-[3px]" />
              <div className="flex-1" />
              <Btn className="h-[33px] w-[60px]">Sliders</Btn>
              <button type="button" aria-label="Undo" className={`ml-[18px] flex h-[31px] w-8 items-center justify-center ${RAISED}`}>
                <svg width="20" height="16" viewBox="0 0 20 16" aria-hidden>
                  <path d="M1.500 4v8h8M2 11.500Q8 3 13 3.500t4 5.500l-3 4" fill="none" stroke="#b0ad9e" strokeWidth="1.600" />
                </svg>
              </button>
              <button type="button" aria-label="Redo" className={`ml-[6px] flex h-[31px] w-8 items-center justify-center ${RAISED}`}>
                <svg width="20" height="16" viewBox="0 0 20 16" aria-hidden>
                  <path d="M18.500 4v8h-8M18 11.500Q12 3 7 3.500T3 9l3 4" fill="none" stroke="#b0ad9e" strokeWidth="1.600" />
                </svg>
              </button>
            </div>
          </div>

          {/* right column */}
          <div className="flex w-[234px] flex-col">
            <div className="flex h-[213px] gap-2">
              <div className={`mt-[6px] flex h-[191px] flex-1 bg-white ${SUNKEN}`}>
                <ul role="listbox" aria-label="Scale" className="grid flex-1 auto-rows-fr pl-[3px] pt-px">
                  {scales.map((s) => (
                    <li key={s} role="option" className="min-h-0 whitespace-nowrap leading-[14px]">{s}</li>
                  ))}
                </ul>
                <div className="flex w-[19px] flex-col bg-[#f6f5ef]">
                  <button type="button" aria-label="Scroll up" className="flex h-5 items-center justify-center rounded-[3px] bg-[#c3d4fc]"><Chevron dir="up" /></button>
                  <div className="mt-px h-11 rounded-[3px] bg-[#bfd1fd]" />
                  <div className="flex-1" />
                  <button type="button" aria-label="Scroll down" className="flex h-5 items-center justify-center rounded-[3px] bg-[#c3d4fc]"><Chevron dir="down" /></button>
                </div>
              </div>
              <div className="grid h-[215px] w-[74px] grid-rows-8">
                {["Normalize", "Flip", "Reverse", "Smooth", "Sort", "HSort", "Scatter", "No Dups"].map((t) => (
                  <Btn key={t} className="min-h-0">{t}</Btn>
                ))}
              </div>
            </div>
            <div className="flex pl-[2px]">
              <div className="flex w-[75px] flex-col">
                {["Copy", "Paste Size", "Paste", "Swap"].map((t) => (
                  <Btn key={t} className="h-[26px]">{t}</Btn>
                ))}
              </div>
              <div className="ml-1 flex flex-1 flex-col justify-between">
                <div className="flex justify-between">
                  <div className="-mt-[2px] flex w-[74px] flex-col">
                    <Btn className="h-[26px]">Cut</Btn>
                    <Btn className="h-[26px]">Merge</Btn>
                  </div>
                  <div className="mt-[7px] flex w-[74px] flex-col">
                    <Btn className="h-[26px]">Trim</Btn>
                    <Btn className="h-[26px]">Mask</Btn>
                  </div>
                </div>
                <div className="flex justify-end gap-2">
                  <Btn className="h-[33px] w-[60px]">OK</Btn>
                  <Btn className="h-[33px] w-[60px]">Cancel</Btn>
                </div>
              </div>
            </div>
          </div>
        </div>
      </div>
    </section>
  );
}

/* ---------- page ---------- */

interface WorkspaceProps {
  active?: string;
  menu: string;
  toolbar: string;
  canvas: string;
  scroll: string;
  lower: string;
  rows: string;
  values?: string[];
  children: React.ReactNode;
}

function Workspace({ active, menu, toolbar, canvas, scroll, lower, rows, values, children }: WorkspaceProps) {
  return (
    <div className={`relative border-x-[5px] border-y-[6px] border-[#808080] bg-[#ece9d8] ${APP_FONT}`}>
      <MenuBar active={active} className={menu} />
      <MainToolbar height={toolbar} />
      <div className={`flex ${canvas}`}>
        <div className="flex-1 bg-[#4080c0]" />
        <VScroll thumb="h-[9px]" bottomArrow />
      </div>
      <HScroll height={scroll} />
      <ModuleToolbar />
      <div className={`flex ${lower}`}>
        <Tree />
        <div className="flex flex-1 overflow-hidden border-l-[3px] border-[#8a8880] bg-[#a1b6d2]">
          <ModulePanel values={values} rowsHeight={rows} />
        </div>
        <VScroll thumb="h-[21px]" />
      </div>
      {children}
    </div>
  );
}

export default function App() {
  return (
    <main className="min-h-screen bg-white pb-[107px] pl-[262px] pr-[259px] pt-[74px]">
      <div className="mr-[3px]">
        <Workspace active="DataBin" menu="h-[31px]" toolbar="h-[35px]" canvas="h-[192px]" scroll="h-[30px]" lower="h-[552px]" rows="h-[410px]">
          <DataSourceDialog />
        </Workspace>
      </div>
      <div className="mt-[65px]">
        <Workspace
          menu="h-[28px] pb-[3px]"
          toolbar="h-[34px]"
          canvas="h-[195px]"
          scroll="h-[29px]"
          lower="h-[563px]"
          rows="h-[412px]"
          values={["0", "0", "38313", "7686", "3845", "20", "0", "0", "0", "0", "1", "0", "0"]}
        >
          <SequencerDialog />
        </Workspace>
      </div>
    </main>
  );
}
